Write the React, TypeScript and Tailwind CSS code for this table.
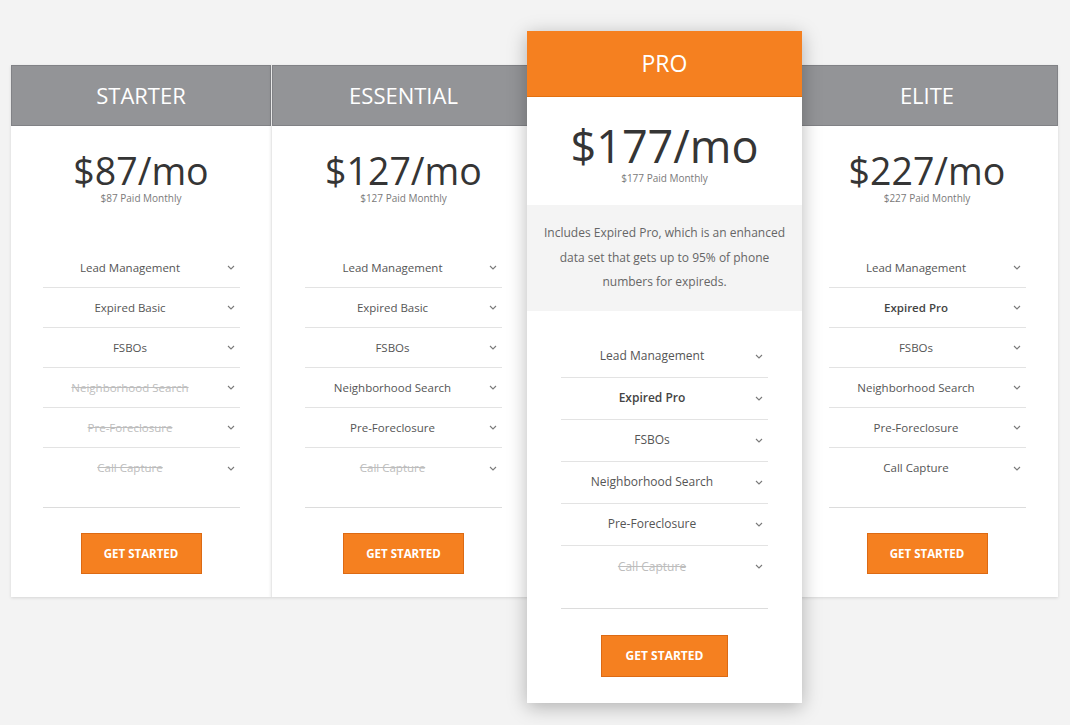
import { clsx } from "clsx";

type Feature = { label: string; off?: boolean; bold?: boolean };

type Plan = {
  name: string;
  price: string;
  paid: string;
  card: string;
  features: Feature[];
};

const names = [
  "Lead Management",
  "Expired Basic",
  "FSBOs",
  "Neighborhood Search",
  "Pre-Foreclosure",
  "Call Capture",
];

const plans: Plan[] = [
  {
    name: "STARTER",
    price: "$87/mo",
    paid: "$87 Paid Monthly",
    card: "w-[260px]",
    features: names.map((label, i) => ({ label, off: i >= 3 })),
  },
  {
    name: "ESSENTIAL",
    price: "$127/mo",
    paid: "$127 Paid Monthly",
    card: "w-[264px] mr-[-8px] border-l border-[#e8e8e8]",
    features: names.map((label, i) => ({ label, off: i === 5 })),
  },
];

const elite: Plan = {
  name: "ELITE",
  price: "$227/mo",
  paid: "$227 Paid Monthly",
  card: "w-[262px] ml-[-6px]",
  features: names.map((label, i) =>
    i === 1 ? { label: "Expired Pro", bold: true } : { label }
  ),
};

const proFeatures: Feature[] = names.map((label, i) =>
  i === 1 ? { label: "Expired Pro", bold: true } : { label, off: i === 5 }
);

function Chevron() {
  return (
    <svg width="8" height="5" viewBox="0 0 8 5" fill="none" className="shrink-0">
      <path d="M1 1l3 3 3-3" stroke="#7a7a7a" strokeWidth="1.1" />
    </svg>
  );
}

function FeatureRow({ f, big, last }: { f: Feature; big?: boolean; last?: boolean }) {
  return (
    <div
      className={clsx(
        "flex items-center",
        big ? "h-[42px] text-[12px]" : "h-[40px] text-[11.5px]",
        !last && "border-b border-[#e3e3e3]"
      )}
    >
      <span
        className={clsx(
          "flex-1 text-center",
          f.off && "text-[#bdbdbd] line-through",
          f.bold && "font-semibold text-[#444]",
          !f.off && !f.bold && "text-[#555]"
        )}
      >
        {f.label}
      </span>
      <span className={clsx("flex justify-end pr-[5px]", big ? "w-[25px]" : "w-[22px]")}>
        <Chevron />
      </span>
    </div>
  );
}

function Button({ big }: { big?: boolean }) {
  return (
    <button
      className={clsx(
        "border border-[#dc6a14] bg-[#f58020] font-bold text-white",
        big ? "h-[42px] w-[127px] text-[12px]" : "h-[41px] w-[121px] text-[11.5px]"
      )}
    >
      GET STARTED
    </button>
  );
}

function PlanCard({ plan }: { plan: Plan }) {
  return (
    <div className={clsx("mt-[34px] bg-white shadow-[0_1px_3px_rgba(0,0,0,0.12)]", plan.card)}>
      <div className="flex h-[61px] items-center justify-center border border-[#818286] bg-[#939497] text-[22px] font-normal text-white">
        {plan.name}
      </div>
      <div className="flex flex-col items-center pt-[26px]">
        <div className="text-[37.5px] leading-[38px] text-[#353535]">{plan.price}</div>
        <div className="mt-[1px] text-[10px] leading-[14px] text-[#7a7a7a]">{plan.paid}</div>
      </div>
      <div className="mx-auto mt-[43px] w-[197px] border-b border-[#dcdcdc] pb-[19px]">
        {plan.features.map((f, i) => (
          <FeatureRow key={f.label} f={f} last={i === plan.features.length - 1} />
        ))}
      </div>
      <div className="flex justify-center pb-[23px] pt-[25px]">
        <Button />
      </div>
    </div>
  );
}

export default function App() {
  return (
    <div
      className="min-h-screen bg-[#f3f3f3] px-[11px] pt-[31px]"
      style={{ fontFamily: '"Open Sans", "Noto Sans", sans-serif' }}
    >
      <div className="flex items-start">
        {plans.map((p) => (
          <PlanCard key={p.name} plan={p} />
        ))}
        <div className="relative z-10 w-[275px] bg-white shadow-[0_4px_18px_rgba(0,0,0,0.28)]">
          <div className="flex h-[66px] items-center justify-center border-b border-[#e2700f] bg-[#f58020] text-[23px] font-normal text-white">
            PRO
          </div>
          <div className="flex flex-col items-center pt-[25px]">
            <div className="text-[45px] leading-[48px] text-[#353535]">$177/mo</div>
            <div className="mt-[1px] text-[10px] leading-[14px] text-[#7a7a7a]">$177 Paid Monthly</div>
          </div>
          <div className="mt-[20px] bg-[#f4f4f4] px-[10px] py-[16px] text-center text-[12px] leading-[24.5px] text-[#666]">
            Includes Expired Pro, which is an enhanced
            <br />
            data set that gets up to 95% of phone
            <br />
            numbers for expireds.
          </div>
          <div className="mx-[34px] mt-[25px] border-b border-[#dcdcdc] pb-[20px]">
            {proFeatures.map((f, i) => (
              <FeatureRow key={f.label} f={f} big last={i === proFeatures.length - 1} />
            ))}
          </div>
          <div className="flex justify-center pb-[26px] pt-[26px]">
            <Button big />
          </div>
        </div>
        <PlanCard plan={elite} />
      </div>
    </div>
  );
}
